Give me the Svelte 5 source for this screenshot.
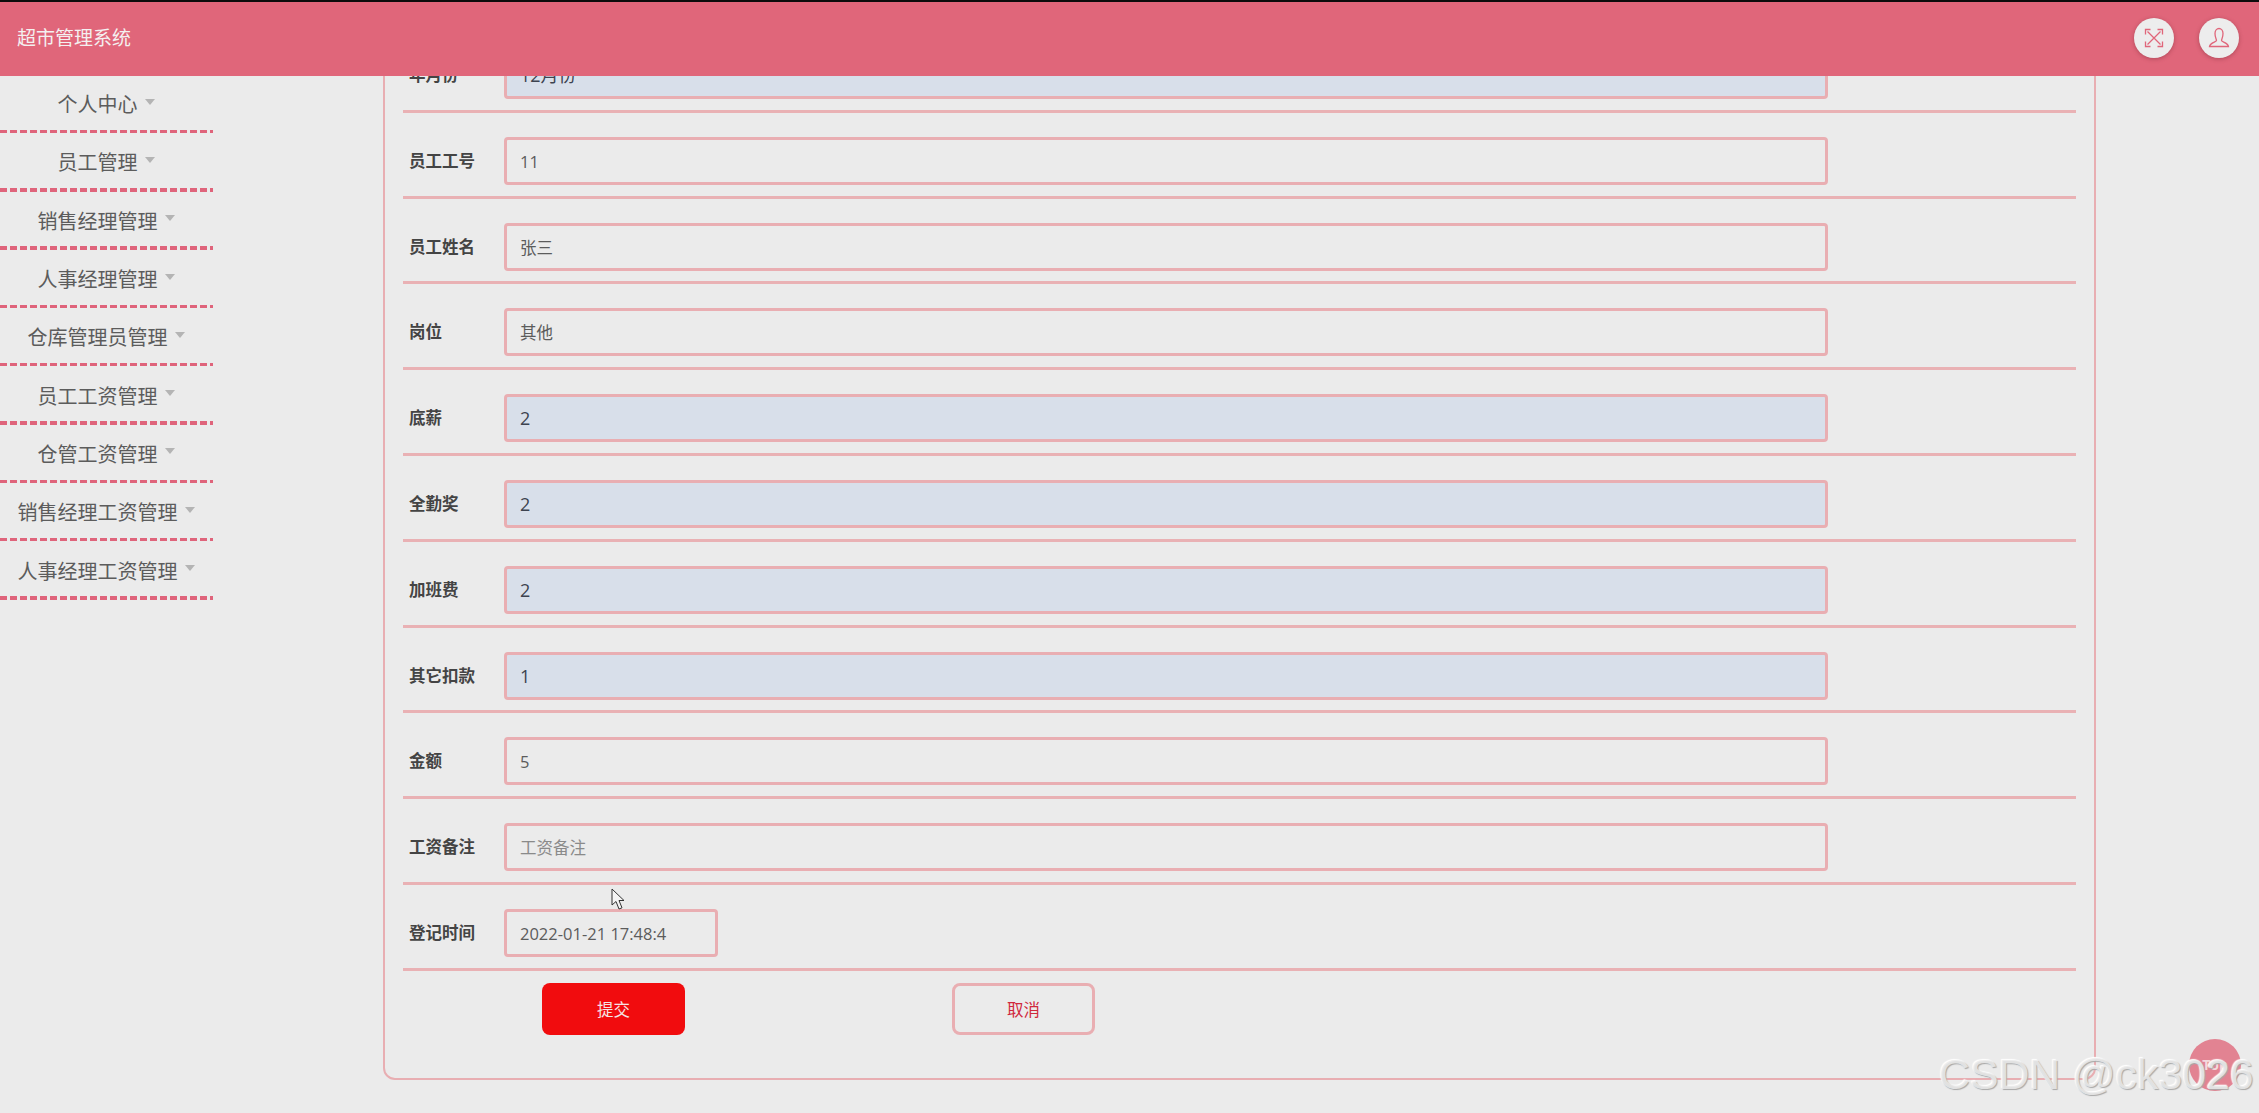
<script>
	const menu = ['个人中心', '员工管理', '销售经理管理', '人事经理管理', '仓库管理员管理', '员工工资管理', '仓管工资管理', '销售经理工资管理', '人事经理工资管理'];

	const fields = [
		{ label: '年月份', value: '12月份', fill: true },
		{ label: '员工工号', value: '11' },
		{ label: '员工姓名', value: '张三' },
		{ label: '岗位', value: '其他' },
		{ label: '底薪', value: '2', fill: true },
		{ label: '全勤奖', value: '2', fill: true },
		{ label: '加班费', value: '2', fill: true },
		{ label: '其它扣款', value: '1', fill: true },
		{ label: '金额', value: '5' },
		{ label: '工资备注', value: '工资备注', hint: true },
		{ label: '登记时间', value: '2022-01-21 17:48:4', short: true }
	];
</script>

<div class="page">
	<header class="topbar">
		<span class="brand">超市管理系统</span>
		<div class="actions">
			<span class="round">
				<svg viewBox="0 0 20 20" width="20" height="20" fill="none" stroke="currentColor" stroke-width="1.3">
					<path d="M3.5 3.5 16.5 16.5M16.5 3.5 3.5 16.5" />
					<path d="M1.5 6.5V1.5H6.5M13.5 1.5H18.500V6.500M18.500 13.500V18.500H13.500M6.500 18.500H1.500V13.500" />
				</svg>
			</span>
			<span class="round">
				<svg viewBox="0 0 22 22" width="22" height="22" fill="none" stroke="currentColor" stroke-width="1.3">
					<path d="M8.500 13.500C8.500 12 7 10.500 7 6.500C7 3.500 8.800 1.500 11 1.500C13.200 1.500 15 3.500 15 6.500C15 10.500 13.500 12 13.500 13.500C13.500 15 20 15.500 20.500 19.500H1.500C2 15.500 8.500 15 8.500 13.500Z" />
				</svg>
			</span>
		</div>
	</header>

	<div class="shell">
		<nav class="sidebar">
			{#each menu as item (item)}
				<div class="menu-item">
					<span>{item}</span>
					<i class="caret"></i>
				</div>
			{/each}
		</nav>

		<main class="content">
			<form class="card">
				{#each fields as field (field.label)}
					<div class="row">
						<span class="label">{field.label}</span>
						<div class="input" class:fill={field.fill} class:hint={field.hint} class:short={field.short}>{field.value}</div>
					</div>
				{/each}
				<div class="buttons">
					<button type="button" class="submit">提交</button>
					<button type="button" class="cancel">取消</button>
				</div>
			</form>
		</main>
	</div>

	<div class="to-top">Top</div>
	<svg class="cursor" viewBox="0 0 14 22" width="14" height="22">
		<path d="M1 1V17L5 13.500L8 21L11 19.800L8 12.500H13Z" fill="#f4f4f4" stroke="#333" stroke-width="1" />
	</svg>
	<div class="watermark">CSDN @ck3026</div>
</div>

<style>
	:global(body) {
		margin: 0;
		background: #ebebeb;
	}

	.page {
		position: relative;
		height: 1113px;
		overflow: hidden;
		background: #ebebeb;
		font-family: "Open Sans", "Noto Sans CJK SC", sans-serif;
		display: flex;
		flex-direction: column;
	}

	.topbar {
		box-sizing: border-box;
		flex: none;
		height: 76px;
		border-top: 2px solid #0c0c0c;
		background: #e0667a;
		color: #f4f0f0;
		display: flex;
		align-items: center;
		justify-content: space-between;
		padding: 0 20px 2px 17px;
		position: relative;
		z-index: 2;
	}

	.brand {
		font-size: 19px;
		line-height: 24px;
	}

	.actions {
		display: flex;
		gap: 25px;
	}

	.round {
		width: 40px;
		height: 40px;
		border-radius: 50%;
		background: #ededed;
		color: #e0667a;
		box-shadow: 0 1px 4px rgba(120, 40, 50, 0.45);
		display: flex;
		align-items: center;
		justify-content: center;
	}

	.shell {
		flex: 1;
		display: flex;
		min-height: 0;
	}

	.sidebar {
		flex: none;
		width: 213px;
		margin-top: -1px;
	}

	.menu-item {
		box-sizing: border-box;
		height: 58.3px;
		background: linear-gradient(90deg, #df647b 7.5px, transparent 7.5px) left bottom / 10px 3.5px repeat-x;
		display: flex;
		align-items: center;
		justify-content: center;
		gap: 7px;
		font-size: 20px;
		color: #5c5c5c;
		padding: 0 1px 1px 0;
	}

	.caret {
		width: 0;
		height: 0;
		border-left: 5.500px solid transparent;
		border-right: 5.500px solid transparent;
		border-top: 6px solid #b4b4b4;
		margin-bottom: 4px;
	}

	.content {
		flex: 1;
		min-width: 0;
		padding-left: 170px;
	}

	.card {
		box-sizing: border-box;
		width: 1713px;
		margin-top: -51px;
		padding: 0 18px 43px 18px;
		border: 2px solid #e8aeb2;
		border-radius: 12px;
	}

	.row {
		box-sizing: border-box;
		height: 85.8px;
		padding-top: 24px;
		border-bottom: 3px solid #e9b1b4;
		display: flex;
		align-items: flex-start;
	}

	.label {
		flex: none;
		box-sizing: border-box;
		width: 101px;
		padding-left: 6px;
		font-size: 16.500px;
		font-weight: 700;
		line-height: 47px;
		color: #444;
	}

	.input {
		box-sizing: border-box;
		width: 1324px;
		height: 48px;
		border: 3px solid #e9aeb2;
		border-radius: 4px;
		padding: 0 13px;
		font-size: 16.500px;
		line-height: 43px;
		color: #5c5c5c;
	}

	.input.fill {
		background: #d8dfea;
		color: #3d4350;
		font-size: 18px;
	}

	.input.hint {
		color: #8a8a8a;
	}

	.input.short {
		width: 214px;
	}

	.buttons {
		display: flex;
		gap: 267px;
		padding: 12px 0 0 139px;
	}

	.buttons button {
		box-sizing: border-box;
		width: 143px;
		height: 52px;
		border-radius: 8px;
		font-family: inherit;
		font-size: 16.500px;
		padding: 0;
	}

	.submit {
		background: #f10c0e;
		border: none;
		color: #f5e4e4;
	}

	.cancel {
		background: transparent;
		border: 3px solid #e9aeb2;
		color: #d0283c;
	}

	.to-top {
		position: absolute;
		left: 2189px;
		top: 1039px;
		width: 52px;
		height: 52px;
		border-radius: 50%;
		background: #e28392;
		color: #f3d9dd;
		font-size: 14px;
		font-weight: 700;
		line-height: 52px;
		text-align: center;
	}

	.cursor {
		position: absolute;
		left: 611px;
		top: 888px;
	}

	.watermark {
		position: absolute;
		left: 1939px;
		top: 1049px;
		font-family: "Liberation Sans", sans-serif;
		font-size: 42.800px;
		line-height: 50px;
		white-space: nowrap;
		color: rgba(236, 236, 236, 0.85);
		text-shadow: 1px 1px 1px #a8a8a8, -1px -1px 1px #ffffff;
	}
</style>
